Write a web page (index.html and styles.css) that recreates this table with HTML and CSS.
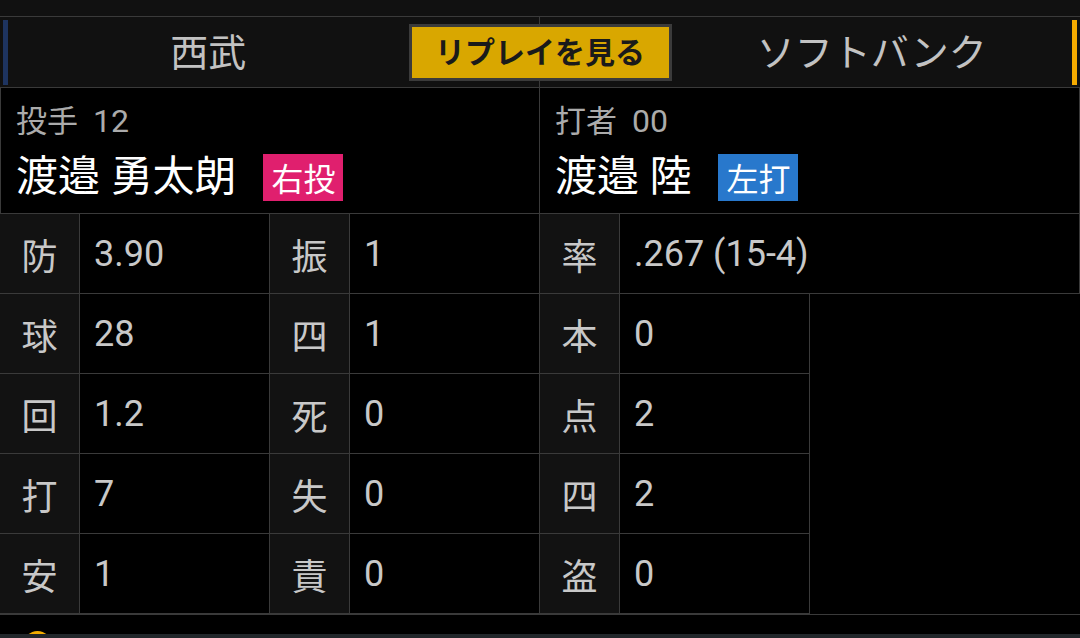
FILE: index.html
```html
<!DOCTYPE html>
<html lang="ja">
<head>
<meta charset="utf-8">
<title>試合速報</title>
<link rel="stylesheet" href="styles.css">
</head>
<body>
<div class="topband"></div>
<header class="teams">
  <span class="bar bar-home"></span>
  <div class="team">西武</div>
  <button class="replay">リプレイを見る</button>
  <div class="team">ソフトバンク</div>
  <span class="bar bar-away"></span>
</header>
<section class="players">
  <div class="player">
    <div class="role"><span class="kj">投手</span><span class="num">12</span></div>
    <div class="name-row"><span class="name">渡邉 勇太朗</span><span class="badge badge-pitch">右投</span></div>
  </div>
  <div class="player">
    <div class="role"><span class="kj">打者</span><span class="num">00</span></div>
    <div class="name-row"><span class="name">渡邉 陸</span><span class="badge badge-bat">左打</span></div>
  </div>
</section>
<section class="stats">
  <div class="lb">防</div><div class="val">3.90</div><div class="lb">振</div><div class="val">1</div><div class="lb">率</div><div class="val wide">.267 (15-4)</div>
  <div class="lb">球</div><div class="val">28</div><div class="lb">四</div><div class="val">1</div><div class="lb">本</div><div class="val">0</div><div class="empty"></div>
  <div class="lb">回</div><div class="val">1.2</div><div class="lb">死</div><div class="val">0</div><div class="lb">点</div><div class="val">2</div><div class="empty"></div>
  <div class="lb">打</div><div class="val">7</div><div class="lb">失</div><div class="val">0</div><div class="lb">四</div><div class="val">2</div><div class="empty"></div>
  <div class="lb">安</div><div class="val">1</div><div class="lb">責</div><div class="val">0</div><div class="lb">盗</div><div class="val">0</div><div class="empty"></div>
</section>
<section class="next">
  <span class="dot"></span>
</section>
<div class="navbar"></div>
</body>
</html>
```
FILE: styles.css
```css
* { box-sizing: border-box; }
html, body {
  margin: 0;
  padding: 0;
  background: #000;
  width: 1080px;
  height: 638px;
  overflow: hidden;
  font-family: Roboto, "Noto Sans CJK JP", sans-serif;
}
.topband {
  height: 17px;
  background: #111;
  border-bottom: 1px solid #3a3a3a;
}
.teams {
  position: relative;
  display: flex;
  align-items: center;
  height: 71px;
  padding: 3px 3px 2px;
  background: #111;
  border-bottom: 1px solid #3a3a3a;
}
.teams::before {
  content: "";
  position: absolute;
  left: 539px;
  top: 0;
  bottom: 0;
  width: 1px;
  background: #3a3a3a;
}
.bar {
  align-self: stretch;
  width: 5px;
}
.bar-home { background: #1e3460; }
.bar-away { background: #f5aa00; }
.team {
  flex: 1;
  text-align: center;
  color: #c2c2c2;
  font-size: 38px;
  line-height: 1;
}
.replay {
  position: relative;
  width: 263px;
  height: 57px;
  margin: 0;
  padding: 0;
  background: #d9a700;
  border: 3px solid #3b3b3b;
  color: #1a1a1a;
  font-family: inherit;
  font-weight: 700;
  font-size: 30px;
  line-height: 1;
}
.players {
  display: grid;
  grid-template-columns: 540px 540px;
  border-bottom: 1px solid #3a3a3a;
}
.player {
  height: 125px;
  padding: 15px 15px 0;
  border-right: 1px solid #3a3a3a;
}
.player:first-child { border-left: 1px solid #3a3a3a; }
.role {
  display: flex;
  align-items: center;
  color: #ababab;
  height: 36px;
  font-size: 30px;
  line-height: 1;
}
.role .kj { font-size: 31px; }
.role .num { margin-left: 15px; font-size: 32px; }
.name-row {
  display: flex;
  align-items: center;
  margin-top: 14px;
  height: 48px;
}
.name {
  color: #fff;
  font-size: 42px;
  line-height: 1;
}
.badge {
  margin-left: 27px;
  width: 80px;
  height: 47px;
  display: flex;
  align-items: center;
  justify-content: center;
  color: #fff;
  font-size: 32px;
}
.badge-pitch { background: #e01f6e; }
.badge-bat { background: #2878cc; }
.stats {
  display: grid;
  grid-template-columns: 80px 190px 80px 190px 80px 190px 270px;
  grid-auto-rows: 80px;
  border-bottom: 1px solid #3a3a3a;
}
.lb, .val {
  display: flex;
  align-items: center;
  border-right: 1px solid #3a3a3a;
  border-bottom: 1px solid #3a3a3a;
  color: #c8c8c8;
  font-size: 36px;
}
.lb {
  justify-content: center;
  background: #121212;
}
.val {
  padding-left: 14px;
  background: #000;
}
.val.wide { grid-column: span 2; }
.next {
  height: 30px;
  padding: 16px 0 0 24px;
}
.dot {
  display: block;
  width: 27px;
  height: 27px;
  border-radius: 50%;
  background: #f2ac00;
}
.navbar {
  position: fixed;
  left: 0;
  right: 0;
  bottom: 0;
  height: 4px;
  background: #22272b;
}
```
